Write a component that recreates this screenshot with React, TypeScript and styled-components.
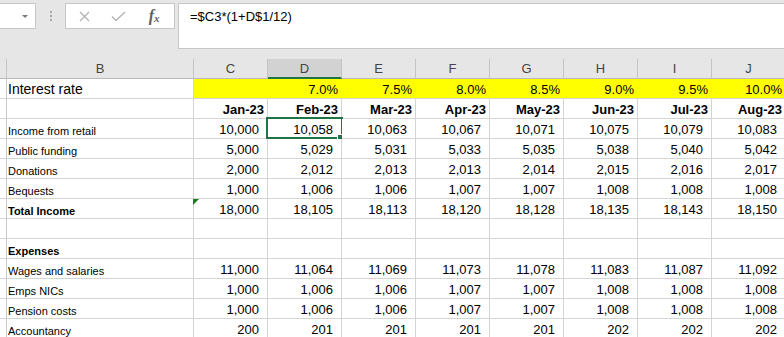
import styled, { createGlobalStyle } from 'styled-components';

const GlobalStyle = createGlobalStyle`
  html, body {
    margin: 0;
    padding: 0;
    background: #fff;
    overflow: hidden;
  }
  body {
    font-family: "Liberation Sans", Arial, sans-serif;
    color: #000;
  }
`;

const Toolbar = styled.div`
  display: flex;
  align-items: flex-start;
  height: 59px;
  padding-top: 3px;
  box-sizing: border-box;
  background: #e6e6e6;
`;

const NameBox = styled.div`
  width: 36px;
  height: 26px;
  box-sizing: border-box;
  background: #fff;
  border: 1px solid #c6c6c6;
  border-left: none;
  display: flex;
  align-items: center;
  justify-content: flex-end;
  padding-right: 7px;
`;

const Caret = styled.span`
  width: 0;
  height: 0;
  border-left: 3px solid transparent;
  border-right: 3px solid transparent;
  border-top: 3px solid #7a7a7a;
`;

const Grip = styled.div`
  width: 29px;
  height: 26px;
  display: flex;
  flex-direction: column;
  align-items: center;
  justify-content: center;
  gap: 2px;
`;

const GripDot = styled.span`
  width: 2px;
  height: 2px;
  background: #a6a6a6;
`;

const ActionBox = styled.div`
  width: 110px;
  height: 26px;
  box-sizing: border-box;
  background: #fff;
  border: 1px solid #c6c6c6;
  display: flex;
  align-items: center;
  padding-left: 2px;
`;

const ActionButton = styled.div<{ $w: number }>`
  width: ${p => p.$w}px;
  height: 100%;
  display: flex;
  align-items: center;
  justify-content: center;
`;

const Fx = styled.span`
  font-family: "Liberation Serif", "Times New Roman", serif;
  font-style: italic;
  font-weight: 700;
  font-size: 16px;
  color: #5f5f5f;
  line-height: 1;
  sub {
    font-size: 11px;
    vertical-align: -1px;
  }
`;

const FormulaBox = styled.div`
  flex: 1;
  height: 46px;
  margin-left: 3px;
  box-sizing: border-box;
  background: #fff;
  border: 1px solid #c6c6c6;
  border-right: none;
  padding: 5px 0 0 11px;
  font-size: 13px;
  line-height: 16px;
`;

const Sheet = styled.div`
  display: grid;
  grid-template-columns: 7px 187px repeat(8, 74px);
  grid-auto-rows: 20px;
  width: 786px;
`;

const HeadCell = styled.div<{ $selected?: boolean }>`
  box-sizing: border-box;
  display: flex;
  align-items: center;
  justify-content: center;
  font-size: 13px;
  color: #444;
  background: ${p => (p.$selected ? '#d2d2d2' : '#e6e6e6')};
  border-right: 1px solid #c4c4c4;
  border-bottom: ${p => (p.$selected ? '2px solid #217346' : '1px solid #b9b9b9')};
`;

const RowHead = styled.div`
  box-sizing: border-box;
  background: #fff;
  border-right: 1px solid #c8c8c8;
  border-bottom: 1px solid #d4d4d4;
`;

const Cell = styled.div<{ $right?: boolean; $size?: number; $bold?: boolean; $fill?: string; $pad?: number }>`
  position: relative;
  box-sizing: border-box;
  display: flex;
  align-items: flex-end;
  justify-content: ${p => (p.$right ? 'flex-end' : 'flex-start')};
  padding: 0 ${p => (p.$right ? p.$pad ?? 8 : 0)}px 1px ${p => (p.$right ? 0 : 1)}px;
  font-size: ${p => p.$size ?? 13}px;
  font-weight: ${p => (p.$bold ? 700 : 400)};
  background: ${p => p.$fill ?? '#fff'};
  border-right: 1px solid ${p => p.$fill ?? '#d4d4d4'};
  border-bottom: 1px solid #d4d4d4;
  white-space: nowrap;
  overflow: visible;
`;

const Selection = styled.div`
  position: absolute;
  left: -2px;
  top: -2px;
  width: 77px;
  height: 22px;
  box-sizing: border-box;
  border: 2px solid #217346;
  pointer-events: none;
`;

const FillHandle = styled.span`
  position: absolute;
  right: -2px;
  bottom: -3px;
  width: 5px;
  height: 5px;
  background: #217346;
  box-shadow: 0 0 0 1px #fff;
`;

const ErrorFlag = styled.span`
  position: absolute;
  left: -1px;
  top: 0;
  width: 0;
  height: 0;
  border-top: 6px solid #1f7a1f;
  border-right: 6px solid transparent;
`;

const columns = ['C', 'D', 'E', 'F', 'G', 'H', 'I', 'J'];
const rates = ['', '7.0%', '7.5%', '8.0%', '8.5%', '9.0%', '9.5%', '10.0%'];
const months = ['Jan-23', 'Feb-23', 'Mar-23', 'Apr-23', 'May-23', 'Jun-23', 'Jul-23', 'Aug-23'];

interface DataRow {
  label: string;
  bold?: boolean;
  values: string[];
}

const rows: DataRow[] = [
  { label: 'Income from retail', values: ['10,000', '10,058', '10,063', '10,067', '10,071', '10,075', '10,079', '10,083'] },
  { label: 'Public funding', values: ['5,000', '5,029', '5,031', '5,033', '5,035', '5,038', '5,040', '5,042'] },
  { label: 'Donations', values: ['2,000', '2,012', '2,013', '2,013', '2,014', '2,015', '2,016', '2,017'] },
  { label: 'Bequests', values: ['1,000', '1,006', '1,006', '1,007', '1,007', '1,008', '1,008', '1,008'] },
  { label: 'Total Income', bold: true, values: ['18,000', '18,105', '18,113', '18,120', '18,128', '18,135', '18,143', '18,150'] },
  { label: '', values: [] },
  { label: 'Expenses', bold: true, values: [] },
  { label: 'Wages and salaries', values: ['11,000', '11,064', '11,069', '11,073', '11,078', '11,083', '11,087', '11,092'] },
  { label: 'Emps NICs', values: ['1,000', '1,006', '1,006', '1,007', '1,007', '1,008', '1,008', '1,008'] },
  { label: 'Pension costs', values: ['1,000', '1,006', '1,006', '1,007', '1,007', '1,008', '1,008', '1,008'] },
  { label: 'Accountancy', values: ['200', '201', '201', '201', '201', '202', '202', '202'] },
];

function Cross() {
  return (
    <svg width="11" height="11" viewBox="0 0 11 11">
      <path d="M1 1 L10 10 M10 1 L1 10" stroke="#b3b3b3" strokeWidth="1.3" fill="none" />
    </svg>
  );
}

function Check() {
  return (
    <svg width="15" height="11" viewBox="0 0 15 11">
      <path d="M1 5.5 L5 9.5 L14 1" stroke="#b3b3b3" strokeWidth="1.4" fill="none" />
    </svg>
  );
}

export default function App() {
  return <>
    <GlobalStyle />
    <Toolbar>
      <NameBox><Caret /></NameBox>
      <Grip><GripDot /><GripDot /><GripDot /></Grip>
      <ActionBox>
        <ActionButton $w={34}><Cross /></ActionButton>
        <ActionButton $w={33}><Check /></ActionButton>
        <ActionButton $w={40}><Fx>f<sub>x</sub></Fx></ActionButton>
      </ActionBox>
      <FormulaBox>=$C3*(1+D$1/12)</FormulaBox>
    </Toolbar>
    <Sheet>
      <HeadCell />
      <HeadCell>B</HeadCell>
      {columns.map(c => <HeadCell key={c} $selected={c === 'D'}>{c}</HeadCell>)}

      <RowHead />
      <Cell $size={14}>Interest rate</Cell>
      {rates.map((r, i) => <Cell key={i} $right $pad={3} $fill="#ffff00">{r}</Cell>)}

      <RowHead />
      <Cell />
      {months.map(m => <Cell key={m} $right $pad={3} $bold>{m}</Cell>)}

      {rows.map((row, r) => (
        <Row key={r} row={row} index={r} />
      ))}
    </Sheet>
  </>
}

function Row({ row, index }: { row: DataRow; index: number }) {
  return <>
    <RowHead />
    <Cell $size={11} $bold={row.bold}>{row.label}</Cell>
    {columns.map((c, i) => (
      <Cell key={c} $right>
        {row.values[i] ?? ''}
        {index === 0 && c === 'D' && <Selection><FillHandle /></Selection>}
        {row.label === 'Total Income' && c === 'C' && <ErrorFlag />}
      </Cell>
    ))}
  </>
}
